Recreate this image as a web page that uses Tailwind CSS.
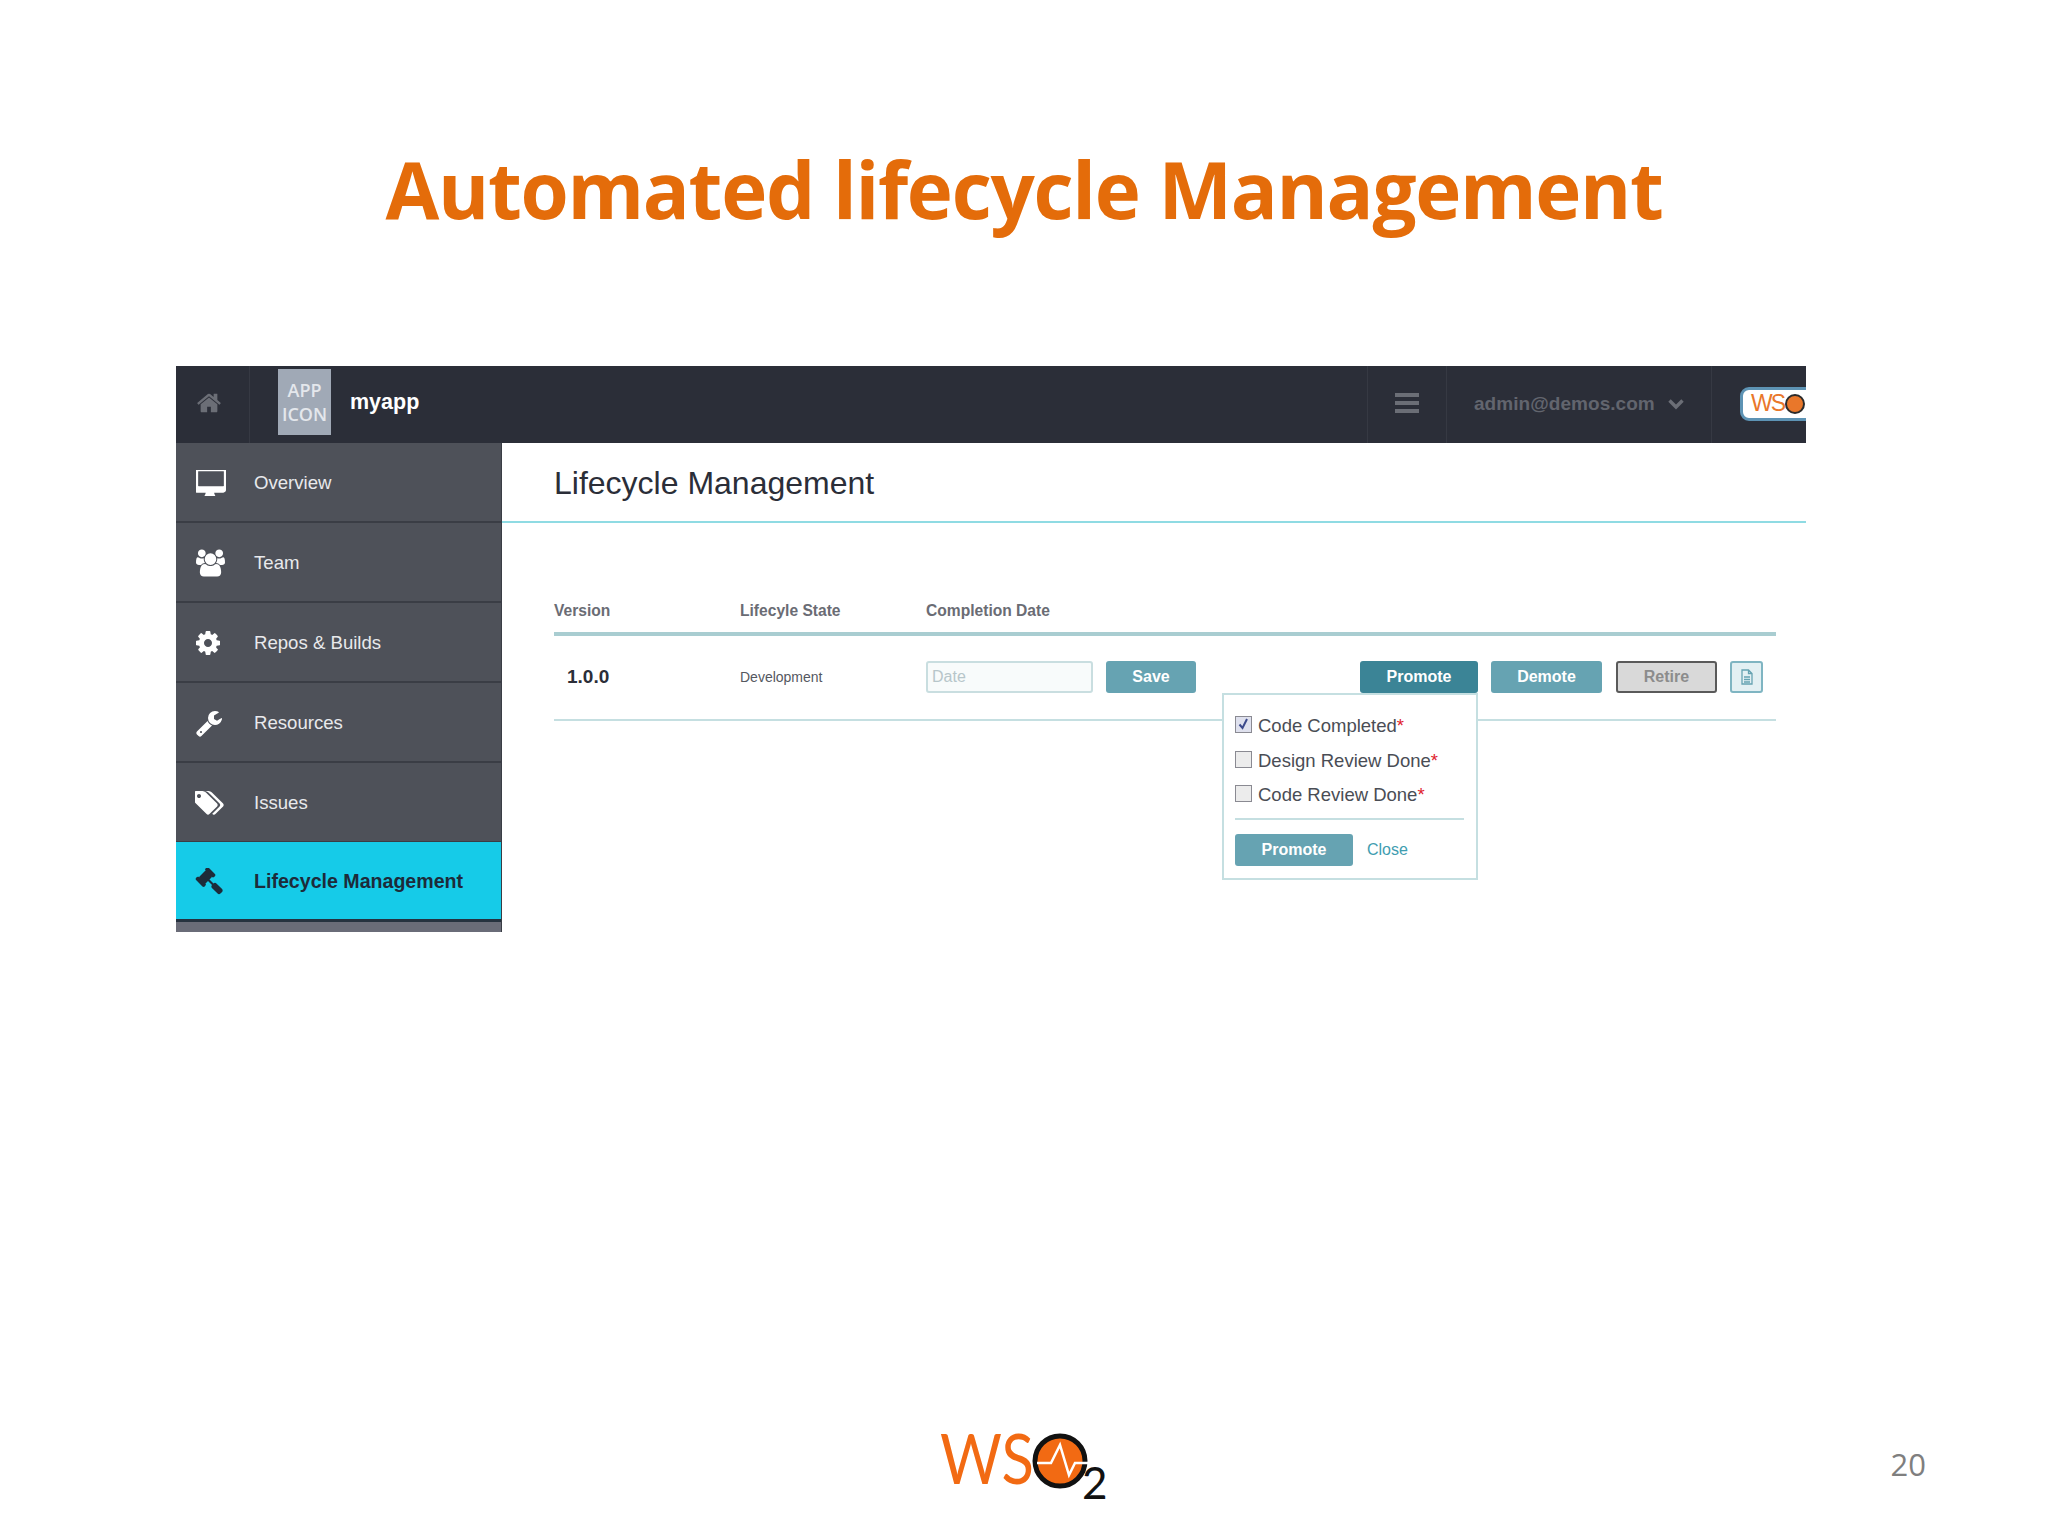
<!DOCTYPE html>
<html lang="en">
<head>
    <meta charset="UTF-8">
    <title>Automated lifecycle Management</title>
    <script src="https://cdn.jsdelivr.net/npm/@tailwindcss/browser@4"></script>
</head>
<body class="bg-white font-['Liberation_Sans',sans-serif] w-[2048px] h-[1536px] overflow-hidden">
    <!-- Slide title -->
    <h1 class="pt-[134px] h-[366px] text-center font-['Open_Sans',sans-serif] font-bold text-[#e46c0a] text-[78px] leading-[110px] tracking-[-1.3px]">Automated lifecycle Management</h1>

    <!-- App screenshot -->
    <div class="ml-[176px] w-[1630px] h-[566px] flex flex-col overflow-hidden">
        <!-- Top bar -->
        <div class="h-[77px] shrink-0 bg-[#2b2e38] flex items-center">
            <div class="w-[74px] h-full flex items-center justify-center pr-[8px] pb-[4px] border-r border-[#363943]">
                <svg class="w-[26px] h-[26px] fill-[#6b6e76]" viewBox="0 0 1792 1792"><path d="M1472 992v480q0 26-19 45t-45 19h-384v-384h-256v384h-384q-26 0-45-19t-19-45v-480q0-1 .5-3t.5-3l575-474 575 474q1 2 1 6zm223-69l-62 74q-8 9-21 11h-3q-13 0-21-7l-692-577-692 577q-12 8-24 7-13-2-21-11l-62-74q-8-10-7-23.5t11-21.5l719-599q32-26 76-26t76 26l244 204v-195q0-14 9-23t23-9h192q14 0 23 9t9 23v408l219 182q10 8 11 21.5t-7 23.5z"/></svg>
            </div>
            <div class="ml-[28px] -mt-[5px] w-[53px] h-[66px] bg-[#a0a9b6] flex flex-col items-center justify-center text-[#e4e7ec] font-['Open_Sans',sans-serif] font-semibold text-[18px] leading-[24px]">
                <span>APP</span>
                <span>ICON</span>
            </div>
            <div class="ml-[19px] -mt-[4px] text-white font-bold text-[21.5px]">myapp</div>
            <div class="ml-auto h-full flex">
                <div class="w-[80px] flex items-center justify-center pb-[3px] border-x border-[#363943]">
                    <div class="w-[24px] flex flex-col gap-[4px]">
                        <div class="h-[4px] bg-[#6b6e76]"></div>
                        <div class="h-[4px] bg-[#6b6e76]"></div>
                        <div class="h-[4px] bg-[#6b6e76]"></div>
                    </div>
                </div>
                <div class="w-[265px] flex items-center pl-[27px] pb-[1px] border-r border-[#363943] text-[#62656e] font-bold text-[19px] tracking-[0.05px]">
                    admin@demos.com
                    <svg class="ml-[13px] w-[16px] h-[12px]" viewBox="0 0 16 12" fill="none" stroke="#6b6e76" stroke-width="3.4"><path d="M1.5 2.5 8 9l6.5-6.5"/></svg>
                </div>
                <div class="w-[94px] flex items-center pl-[28px] pb-[2px] overflow-hidden">
                    <!-- small logo, clipped by the bar -->
                    <div class="w-[90px] h-[34px] shrink-0 bg-white rounded-[9px] border-[3px] border-[#5d93b4] flex items-center pl-[8px] gap-0">
                        <span class="text-[#e9772a] text-[23px] leading-none tracking-[-2px]">WS</span>
                        <span class="ml-[1px] w-[20px] h-[20px] rounded-full bg-[#e9772a] border-[2px] border-[#2b2b2b]"></span>
                    </div>
                </div>
            </div>
        </div>

        <div class="flex-1 flex">
            <!-- Sidebar -->
            <div class="w-[326px] shrink-0 bg-[#6a6c78] border-r border-[#3a3d45]">
                <div class="h-[80px] pt-[2px] flex items-center bg-[#4e5159] border-b-2 border-[#3a3d45] text-[#e8e9ec] text-[18.6px]">
                    <span class="w-[78px] pl-[20px]"><svg class="w-[30px] h-[26px] fill-white" viewBox="0 0 1792 1536"><path d="M1664 928v-832q0-13-9.5-22.5t-22.5-9.5h-1472q-13 0-22.5 9.5t-9.5 22.5v832q0 13 9.5 22.5t22.5 9.5h1472q13 0 22.5-9.5t9.5-22.5zm128-832v1088q0 66-47 113t-113 47h-544q0 37 16 77.5t32 71 16 43.5q0 26-19 45t-45 19h-512q-26 0-45-19t-19-45q0-14 16-44t32-70 16-78h-544q-66 0-113-47t-47-113v-1088q0-66 47-113t113-47h1632q66 0 113 47t47 113z"/></svg></span>
                    Overview
                </div>
                <div class="h-[80px] pt-[2px] flex items-center bg-[#4e5159] border-b-2 border-[#3a3d45] text-[#e8e9ec] text-[18.6px]">
                    <span class="w-[78px] pl-[20px]"><svg class="w-[29px] h-[28px] fill-white" viewBox="0 0 1920 1792"><path d="M593 896q-162 5-265 128h-134q-82 0-138-40.5t-56-118.5q0-353 124-353 6 0 43.5 21t97.5 42.5 119 21.5q67 0 133-23-5 37-5 66 0 139 81 256zm1071 637q0 120-73 189.5t-194 69.5h-874q-121 0-194-69.5t-73-189.5q0-53 3.5-103.5t14-109 26.5-108.5 43-97.5 62-81 85.5-53.5 111.5-20q10 0 43 21.5t73 48 107 48 135 21.5 135-21.5 107-48 73-48 43-21.5q61 0 111.5 20t85.5 53.5 62 81 43 97.5 26.5 108.5 14 109 3.5 103.5zm-1024-1277q0 106-75 181t-181 75-181-75-75-181 75-181 181-75 181 75 75 181zm704 384q0 159-112.5 271.5t-271.5 112.5-271.5-112.5-112.5-271.5 112.5-271.5 271.5-112.5 271.5 112.5 112.5 271.5zm576 225q0 78-56 118.5t-138 40.5h-134q-103-123-265-128 81-117 81-256 0-29-5-66 66 23 133 23 59 0 119-21.5t97.5-42.5 43.5-21q124 0 124 353zm-128-609q0 106-75 181t-181 75-181-75-75-181 75-181 181-75 181 75 75 181z"/></svg></span>
                    Team
                </div>
                <div class="h-[80px] pt-[2px] flex items-center bg-[#4e5159] border-b-2 border-[#3a3d45] text-[#e8e9ec] text-[18.6px]">
                    <span class="w-[78px] pl-[18px]"><svg class="w-[28px] h-[28px] fill-white" viewBox="0 0 1792 1792"><path d="M1152 896q0-106-75-181t-181-75-181 75-75 181 75 181 181 75 181-75 75-181zm512-109v222q0 12-8 23t-20 13l-185 28q-19 54-39 91 35 50 107 138 10 12 10 25t-9 23q-27 37-99 108t-94 71q-12 0-26-9l-138-108q-44 23-91 38-16 136-29 186-7 28-36 28h-222q-14 0-24.5-8.5t-11.5-21.5l-28-184q-49-16-90-37l-141 107q-10 9-25 9-14 0-25-11-126-114-165-168-7-10-7-23 0-12 8-23 15-21 51-66.5t54-70.5q-27-50-41-99l-183-27q-13-2-21-12.5t-8-23.5v-222q0-12 8-23t19-13l186-28q14-46 39-92-40-57-107-138-10-12-10-24 0-10 9-23 26-36 98.5-107.5t94.5-71.5q13 0 26 10l138 107q44-23 91-38 16-136 29-186 7-28 36-28h222q14 0 24.5 8.5t11.5 21.5l28 184q49 16 90 37l142-107q9-9 24-9 13 0 25 10 129 119 165 170 7 8 7 22 0 12-8 23-15 21-51 66.5t-54 70.5q26 50 41 98l183 28q13 2 22 12.5t9 23.5z"/></svg></span>
                    Repos &amp; Builds
                </div>
                <div class="h-[80px] pt-[2px] flex items-center bg-[#4e5159] border-b-2 border-[#3a3d45] text-[#e8e9ec] text-[18.6px]">
                    <span class="w-[78px] pl-[19px]"><svg class="w-[28px] h-[28px] fill-white" viewBox="0 0 1792 1792"><path d="M448 1472q0-26-19-45t-45-19-45 19-19 45 19 45 45 19 45-19 19-45zm644-420l-682 682q-37 37-90 37-52 0-91-37l-106-108q-38-36-38-90 0-53 38-91l681-681q39 98 114.5 173.5t173.5 114.5zm634-435q0 39-23 106-47 134-164.5 217.5t-258.5 83.5q-185 0-316.5-131.5t-131.5-316.5 131.5-316.5 316.5-131.5q58 0 121.5 16.5t107.5 46.5q16 11 16 28t-16 28l-293 169v224l193 107q5-3 79-48.5t135.5-81 70.5-35.5q15 0 23.5 10t8.5 25z"/></svg></span>
                    Resources
                </div>
                <div class="h-[80px] pt-[2px] flex items-center bg-[#4e5159] border-b-2 border-[#3a3d45] text-[#e8e9ec] text-[18.6px]">
                    <span class="w-[78px] pl-[19px]"><svg class="w-[30px] h-[28px] fill-white" viewBox="0 0 1920 1792"><path d="M384 448q0-53-37.5-90.5t-90.5-37.5-90.5 37.5-37.5 90.5 37.5 90.5 90.5 37.5 90.5-37.5 37.5-90.5zm1067 576q0 53-37 90l-491 492q-39 37-91 37-53 0-90-37l-715-716q-38-37-64.5-101t-26.5-117v-416q0-52 38-90t90-38h416q53 0 117 26.5t102 64.5l715 714q37 39 37 91zm384 0q0 53-37 90l-491 492q-39 37-91 37-36 0-59-14t-53-45l470-470q37-37 37-90 0-52-37-91l-715-714q-38-38-102-64.5t-117-26.5h224q53 0 117 26.5t102 64.5l715 714q37 39 37 91z"/></svg></span>
                    Issues
                </div>
                <div class="h-[80px] -mt-[1px] pt-[2px] flex items-center bg-[#16cbe8] border-b-[3px] border-[#26323f] text-[#1d2b3a] font-bold text-[19.6px]">
                    <span class="w-[78px] pl-[19px]"><svg class="w-[28px] h-[28px] fill-[#1d2b3a]" viewBox="0 0 1792 1792"><path d="M1771 1440q0 53-37 90l-107 108q-39 37-91 37-53 0-90-37l-363-364q-38-36-38-90 0-53 43-96l-256-256-126 126q-14 14-34 14t-34-14q2 2 12.5 12t12.5 13 10 11.5 10 13.5 6 13.5 5.5 16.5 1.5 18q0 38-28 68-3 3-16.5 18t-19 20.5-18.5 16.5-22 15.5-22 9-26 4.5q-40 0-68-28l-408-408q-28-28-28-68 0-13 4.5-26t9-22 15.5-22 16.5-18.5 20.5-19 18-16.5q30-28 68-28 10 0 18 1.5t16.5 5.5 13.5 6 13.5 10 11.5 10 13 12.5 12 12.5q-14-14-14-34t14-34l348-348q14-14 34-14t34 14q-2-2-12.5-12t-12.5-13-10-11.5-10-13.5-6-13.5-5.5-16.5-1.5-18q0-38 28-68 3-3 16.5-18t19-20.5 18.5-16.5 22-15.5 22-9 26-4.5q40 0 68 28l408 408q28 28 28 68 0 13-4.5 26t-9 22-15.5 22-16.5 18.5-20.5 19-18 16.5q-30 28-68 28-10 0-18-1.5t-16.5-5.5-13.5-6-13.5-10-11.5-10-13-12.5-12-12.5q14 14 14 34t-14 34l-126 126 256 256q43-43 96-43 52 0 91 37l363 363q37 39 37 91z"/></svg></span>
                    Lifecycle Management
                </div>
            </div>

            <!-- Main panel -->
            <div class="flex-1 bg-white">
                <div class="h-[80px] pl-[52px] pt-[2px] flex items-center border-b-2 border-[#8fdbe3] text-[#2b2e38] text-[32px]">Lifecycle Management</div>
                <div class="relative mx-[52px] mr-[30px]">
                    <!-- Table head -->
                    <div class="h-[113px] pt-[77px] flex border-b-[4px] border-[#a9cdd1] text-[#6a6c74] font-bold text-[15.6px] leading-[22px] w-[1222px]">
                        <div class="w-[186px]">Version</div>
                        <div class="w-[186px]">Lifecyle State</div>
                        <div>Completion Date</div>
                    </div>
                    <!-- Row -->
                    <div class="h-[85px] pb-[1px] flex items-center border-b-2 border-[#c5dfe1]">
                        <div class="w-[186px] pl-[13px] font-bold text-[19px] text-[#2b2e38]">1.0.0</div>
                        <div class="w-[186px] text-[14px] text-[#55585f]">Development</div>
                        <div class="w-[167px] h-[32px] rounded-[3px] border-2 border-[#c9dee0] bg-[#f8fbfb] pl-[4px] text-[16px] leading-[28px] text-[#b7c6ca]">Date</div>
                        <div class="ml-[13px] w-[90px] h-[32px] rounded-[3px] bg-[#66a3b2] text-white font-bold text-[16px] flex items-center justify-center">Save</div>
                        <div class="ml-[164px] w-[118px] h-[32px] rounded-[3px] bg-[#3b8496] text-white font-bold text-[16px] flex items-center justify-center">Promote</div>
                        <div class="ml-[13px] w-[111px] h-[32px] rounded-[3px] bg-[#66a3b2] text-white font-bold text-[16px] flex items-center justify-center">Demote</div>
                        <div class="ml-[14px] w-[101px] h-[32px] rounded-[3px] border-2 border-[#5a5a5a] bg-[#d9d9d9] text-[#8c8c8c] font-bold text-[16px] flex items-center justify-center">Retire</div>
                        <div class="ml-[13px] w-[33px] h-[32px] rounded-[3px] border-2 border-[#7fb5c2] bg-[#e3f0f3] flex items-center justify-center">
                            <svg class="w-[12px] h-[16px]" viewBox="0 0 12 16" fill="none" stroke="#66a3b2" stroke-width="1.3"><path d="M1 1h6.5L11 4.5V15H1zM7.5 1v3.5H11M3 8h6M3 10.5h6M3 13h6"/></svg>
                        </div>
                    </div>
                    <!-- Promote popover -->
                    <div class="absolute left-[668px] top-[170px] w-[256px] h-[187px] bg-white border-2 border-[#c5dfe1] pl-[11px] pr-[12px] pt-[19px] text-[18.5px] text-[#4a4d55]">
                        <div class="h-[35px] flex items-start">
                            <span class="mt-[2px] w-[17px] h-[17px] bg-[#dfe1ee] border border-[#8a8a92] flex items-center justify-center">
                                <svg class="w-[13px] h-[13px]" viewBox="0 0 13 13" fill="none" stroke="#3c4a8c" stroke-width="2"><path d="M2.5 6.5 5.5 10l4.5-9"/></svg>
                            </span>
                            <span class="ml-[6px] leading-[24px]">Code Completed<span class="text-[#e0222e]">*</span></span>
                        </div>
                        <div class="h-[34px] flex items-start">
                            <span class="mt-[2px] w-[17px] h-[17px] bg-[#ececec] border border-[#8a8a92]"></span>
                            <span class="ml-[6px] leading-[24px]">Design Review Done<span class="text-[#e0222e]">*</span></span>
                        </div>
                        <div class="h-[35px] flex items-start">
                            <span class="mt-[2px] w-[17px] h-[17px] bg-[#ececec] border border-[#8a8a92]"></span>
                            <span class="ml-[6px] leading-[24px]">Code Review Done<span class="text-[#e0222e]">*</span></span>
                        </div>
                        <div class="border-t-2 border-[#c5dfe1] pt-[14px] flex items-center">
                            <div class="w-[118px] h-[32px] rounded-[3px] bg-[#66a3b2] text-white font-bold text-[16px] flex items-center justify-center">Promote</div>
                            <span class="ml-[14px] text-[#3f9db0] text-[16px]">Close</span>
                        </div>
                    </div>
                </div>
            </div>
        </div>
    </div>

    <!-- Slide footer -->
    <div class="mt-[480px] ml-[940px] w-[986px] h-[100px] flex items-center">
        <svg class="w-[172px] h-[100px]" viewBox="0 0 172 100">
            <text x="0" y="72" font-family="Lato" font-size="70" fill="#f26a13" textLength="94" lengthAdjust="spacingAndGlyphs">WS</text>
            <circle cx="120" cy="49" r="25" fill="#f26a13" stroke="#111" stroke-width="5"/>
            <path d="M97 51h14l9-18 9 30 6-12h14" fill="none" stroke="#fff" stroke-width="2.5"/>
            <text x="142" y="87" font-family="Lato" font-size="44" fill="#111">2</text>
        </svg>
        <span class="ml-auto mt-[4px] font-['Open_Sans',sans-serif] text-[#7f7f7f] text-[31px]">20</span>
    </div>
</body>
</html>
